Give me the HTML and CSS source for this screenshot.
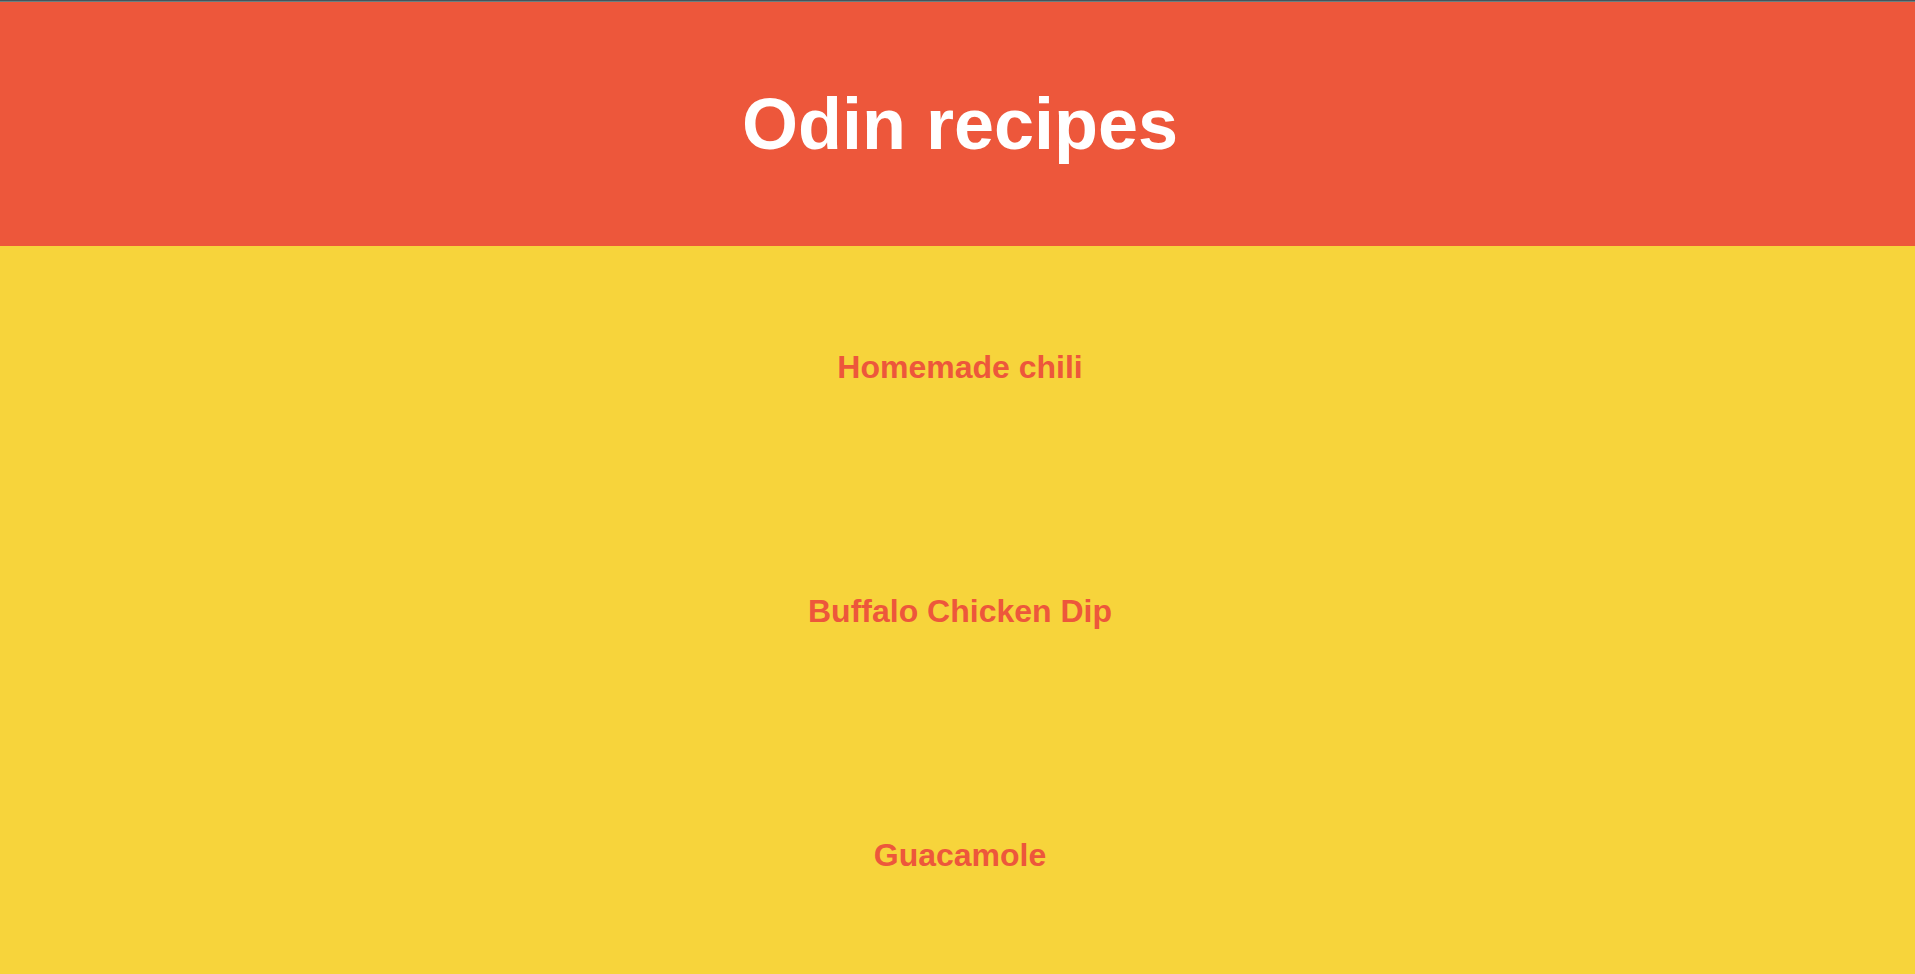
FILE: index.html
```
<!DOCTYPE html>
<html lang="en">
<head>
<meta charset="utf-8">
<title>Odin recipes</title>
<link rel="stylesheet" href="styles.css">
</head>
<body>
<header class="header"><h1 class="title">Odin recipes</h1></header>
<main class="recipes">
<a class="recipe" href="#chili">Homemade chili</a>
<a class="recipe" href="#dip">Buffalo Chicken Dip</a>
<a class="recipe" href="#guacamole">Guacamole</a>
</main>
</body>
</html>
```
FILE: styles.css
```
* { box-sizing: border-box; }
body {
  margin: 0;
  min-height: 100vh;
  display: flex;
  flex-direction: column;
  background: #f7d43b;
  font-family: "Liberation Sans", Arial, sans-serif;
  font-weight: bold;
  text-align: center;
}
.header {
  padding: 82px 0 80px 5px;
  border-top: 1px solid #45555c;
  box-shadow: inset 0 1px #6b8080;
  background: #ed573b;
  color: #fff;
}
.title {
  margin: 0;
  font-size: 72px;
  line-height: 83px;
}
.recipes {
  flex: 1;
  display: grid;
  grid-auto-rows: 244px;
  padding-left: 5px;
}
.recipe {
  display: grid;
  place-items: center;
  padding-bottom: 2px;
  color: #ed573b;
  font-size: 32px;
  line-height: 37px;
  text-decoration: none;
}
```
